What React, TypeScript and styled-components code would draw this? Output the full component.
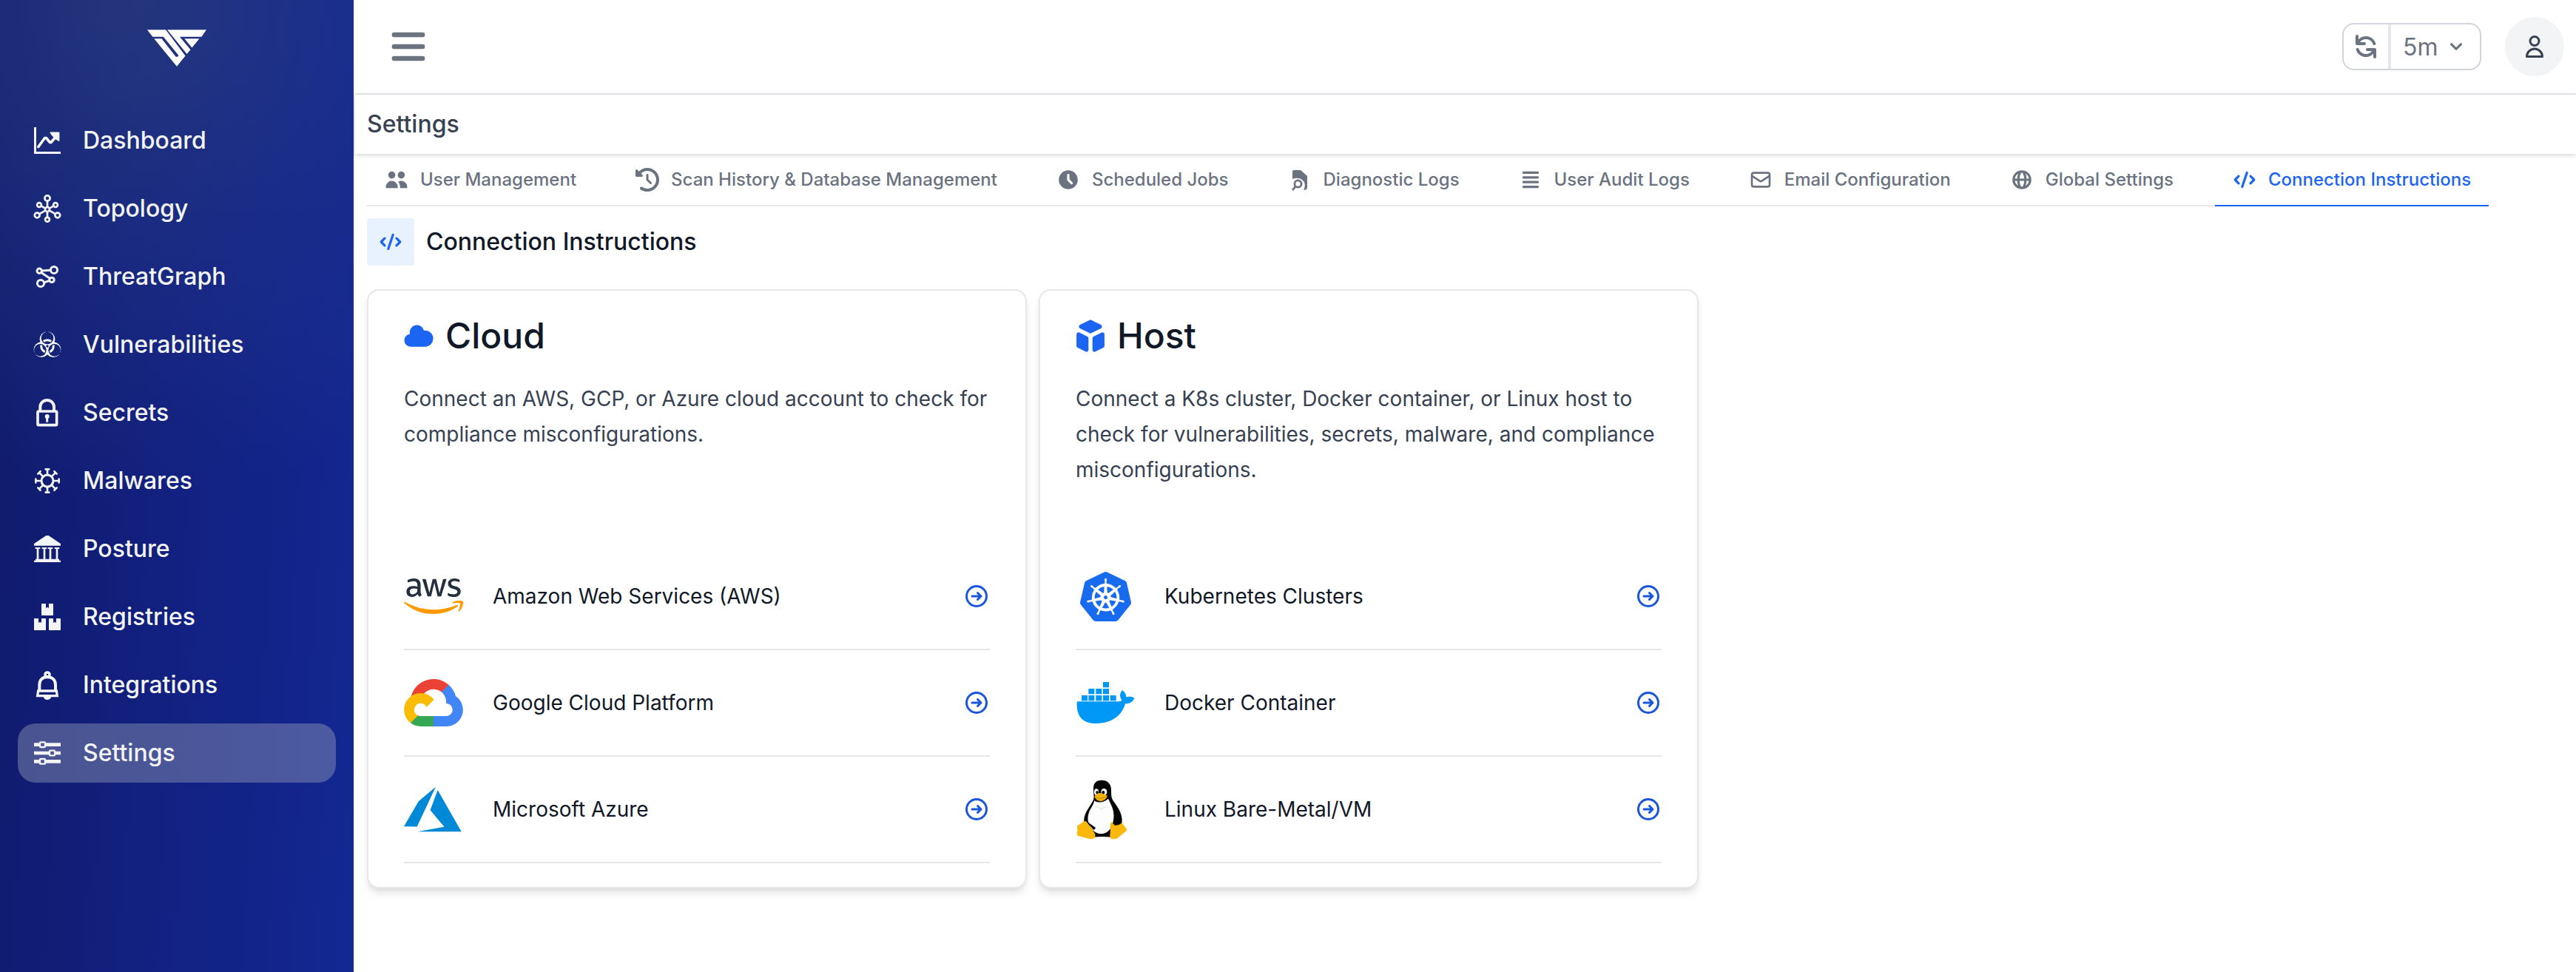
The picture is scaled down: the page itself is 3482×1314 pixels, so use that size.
import React from 'react';
import styled, { createGlobalStyle } from 'styled-components';
import { FaAws } from 'react-icons/fa';
import { FaClockRotateLeft } from 'react-icons/fa6';
import {
  HiChevronDown,
  HiClock,
  HiCode,
  HiGlobeAlt,
  HiMenu,
  HiOutlineArrowCircleRight,
  HiOutlineMail,
  HiOutlineUser,
  HiRefresh,
  HiUsers,
  HiViewList,
} from 'react-icons/hi';
import { SiKubernetes } from 'react-icons/si';

const color = {
  ink: '#111827',
  body: '#374151',
  muted: '#6b7280',
  line: '#e5e7eb',
  outline: '#d1d5db',
  soft: '#f3f4f6',
  blue: '#1c64f2',
  blueDeep: '#1a56db',
  blueSoft: '#e8f2fe',
};

const GlobalStyle = createGlobalStyle`
  *, *::before, *::after { box-sizing: border-box; }
  body {
    margin: 0;
    background: #fff;
    color: ${color.ink};
    font-family: Inter, "Liberation Sans", sans-serif;
    font-size: 28px;
  }
  h1, h2, h3, p, ul { margin: 0; padding: 0; }
  ul { list-style: none; }
  a { color: inherit; text-decoration: none; }
  button, select { font: inherit; color: inherit; border: 0; background: none; margin: 0; padding: 0; cursor: pointer; }
  svg { display: block; flex: none; }
`;

/* ---------- layout ---------- */

const Shell = styled.div`
  display: flex;
  min-height: 100vh;
`;

const Sidebar = styled.aside`
  flex: none;
  width: 480px;
  padding: 40px 24px;
  border-right: 2px solid ${color.soft};
  background:
    radial-gradient(ellipse 120% 52% at 40% 0%, rgba(48, 68, 128, 0.62), rgba(40, 62, 140, 0.34) 50%, transparent),
    linear-gradient(94deg, #101b6a, #122080 50%, #132893);
`;

const Brand = styled.a`
  display: flex;
  justify-content: center;
  margin-bottom: 60px;
`;

const NavList = styled.ul`
  display: flex;
  flex-direction: column;
  gap: 12px;
`;

const NavLink = styled.a<{ $active?: boolean }>`
  display: flex;
  align-items: center;
  gap: 30px;
  height: 80px;
  padding: 0 22px;
  border-radius: 24px;
  background: ${(p) => (p.$active ? 'rgba(156, 163, 185, 0.42)' : 'transparent')};
  color: ${color.soft};
  font-size: 32px;
  font-weight: 500;
  line-height: 38px;
`;

const Main = styled.main`
  flex: 1;
  min-width: 0;
`;

const TopBar = styled.header`
  display: flex;
  align-items: center;
  height: 128px;
  padding: 0 16px 0 40px;
  border-bottom: 2px solid ${color.line};
  color: ${color.muted};
`;

const TopActions = styled.div`
  display: flex;
  align-items: center;
  gap: 32px;
  margin-left: auto;
`;

const RefreshGroup = styled.div`
  display: flex;
  height: 64px;
  overflow: hidden;
  border: 2px solid ${color.outline};
  border-radius: 16px;
`;

const RefreshButton = styled.button`
  display: grid;
  place-items: center;
  width: 64px;
  border-right: 4px solid ${color.line};
`;

const IntervalField = styled.label`
  display: grid;
  align-items: center;
  width: 120px;

  > * { grid-area: 1 / 1; }
  > svg { justify-self: end; margin-right: 16px; pointer-events: none; }
`;

const IntervalSelect = styled.select`
  appearance: none;
  width: 100%;
  height: 100%;
  padding-left: 16px;
  font-size: 32px;
`;

const Avatar = styled.button`
  display: grid;
  place-items: center;
  width: 80px;
  height: 80px;
  border-radius: 50%;
  background: ${color.soft};
  color: ${color.body};
`;

const PageBar = styled.div`
  display: flex;
  align-items: center;
  height: 80px;
  padding: 0 16px;
  box-shadow: 0 2px 6px rgba(0, 0, 0, 0.16);
`;

const PageTitle = styled.h1`
  color: ${color.body};
  font-size: 32px;
  font-weight: 500;
  line-height: 38px;
`;

const Content = styled.div`
  padding: 0 16px 48px;
`;

const Tabs = styled.nav`
  display: flex;
  flex-wrap: wrap;
`;

const Tab = styled.a<{ $active?: boolean }>`
  display: flex;
  align-items: center;
  gap: 16px;
  padding: 19px 24px 18px;
  margin-right: 32px;
  position: relative;
  color: ${(p) => (p.$active ? color.blue : color.muted)};
  border-bottom: 2px solid ${(p) => (p.$active ? color.blue : color.line)};
  font-size: 24px;
  font-weight: 500;
  line-height: 32px;
  white-space: nowrap;

  &:last-child { margin-right: 0; }

  /* carries the rule across the gap between two tabs */
  &:not(:last-child)::after {
    content: '';
    position: absolute;
    left: 100%;
    bottom: -2px;
    width: 32px;
    height: 2px;
    background: ${color.line};
  }
`;

const SectionHead = styled.div`
  display: flex;
  align-items: center;
  gap: 16px;
  margin: 16px 0 32px;
`;

const SectionIcon = styled.span`
  display: grid;
  place-items: center;
  width: 64px;
  height: 64px;
  border-radius: 4px;
  background: ${color.blueSoft};
  color: ${color.blue};
`;

const SectionTitle = styled.h2`
  font-size: 32px;
  font-weight: 500;
  line-height: 38px;
`;

const Cards = styled.div`
  display: grid;
  grid-template-columns: repeat(2, minmax(0, 892px));
  gap: 16px;
`;

const Card = styled.section`
  padding: 32px 48px;
  border: 2px solid ${color.line};
  border-radius: 16px;
  background: #fff;
  box-shadow: 0 8px 12px -2px rgba(0, 0, 0, 0.1), 0 4px 8px -4px rgba(0, 0, 0, 0.1);
`;

const CardTitle = styled.h3`
  display: flex;
  align-items: center;
  gap: 16px;
  margin-bottom: 32px;
  font-size: 48px;
  font-weight: 500;
  line-height: 58px;
  color: ${color.ink};

  svg { color: ${color.blue}; }
`;

const CardText = styled.p`
  min-height: 220px;
  color: ${color.body};
  line-height: 48px;
`;

const Provider = styled.a`
  display: flex;
  align-items: center;
  gap: 40px;
  height: 144px;
  border-bottom: 2px solid ${color.line};
`;

const ProviderLogo = styled.span`
  display: grid;
  place-items: center;
  width: 80px;
  height: 80px;
`;

const ProviderArrow = styled(HiOutlineArrowCircleRight)`
  margin-left: auto;
  color: ${color.blueDeep};
`;

/* ---------- drawings ---------- */

const BrandMark = () => (
  <svg width="80" height="50" viewBox="55 42 242 149" fill="#fff" aria-label="Home">
    <path d="M55 42H131L211 148L176 191L83 78H114L172 152L180 152L183 146L121 70H77Z" />
    <path d="M137 42H297L277 70H188L232 123L217 141Z" />
    <path d="M207 78H268L238 115Z" />
  </svg>
);

const NavSvg = ({ box, children }: { box: number; children: React.ReactNode }) => (
  <svg
    width="36"
    height="36"
    viewBox={`0 0 ${box} ${box}`}
    fill="none"
    stroke="currentColor"
    overflow="visible"
    aria-hidden="true"
  >
    {children}
  </svg>
);

const DashboardIcon = () => (
  <NavSvg box={36}>
    <path d="M1.5 0V34.5H36" strokeWidth="3" />
    <path d="M5.8 26.5L14.5 14.5H16.5L21.5 20.5H23L32 10" strokeWidth="3.6" strokeLinecap="round" strokeLinejoin="round" />
    <path d="M22.5 7.4H33.4V18L29.6 15.4L25.5 11.4Z" fill="currentColor" strokeWidth="2" strokeLinejoin="round" />
  </NavSvg>
);

const TopologyIcon = () => (
  <NavSvg box={36}>
    <g strokeWidth="2.7">
      <circle cx="18" cy="19" r="3" />
      <circle cx="18" cy="4" r="3.6" />
      <circle cx="7" cy="13" r="2.9" />
      <circle cx="29" cy="13" r="2.9" />
      <circle cx="4.2" cy="27" r="3.4" />
      <circle cx="31.8" cy="27" r="3.4" />
      <circle cx="18" cy="32.8" r="2.9" />
      <path d="M18 8V16M18 22V30M9.8 14.6L15.3 17.6M26.2 14.6L20.7 17.6M7.4 25.2L15.3 20.6M28.6 25.2L20.7 20.6" />
    </g>
  </NavSvg>
);

const ThreatGraphIcon = () => (
  <NavSvg box={36}>
    <g strokeWidth="3">
      <circle cx="7.2" cy="10.3" r="3.2" />
      <circle cx="27" cy="9" r="4.6" />
      <circle cx="24" cy="22.4" r="3.2" />
      <circle cx="9" cy="27" r="4.6" />
      <path d="M10.6 10L22.2 9.2M9.8 12.6L21.4 20.2M13.6 25.8L20.8 23.4" />
    </g>
  </NavSvg>
);

const VulnerabilitiesIcon = () => (
  <NavSvg box={108}>
    <defs>
      <mask id="hazard-horns" maskUnits="userSpaceOnUse" x="-4" y="-4" width="116" height="116">
        <g fill="#fff" stroke="none">
          <circle cx="54" cy="32" r="31" />
          <circle cx="30" cy="74" r="31" />
          <circle cx="78" cy="74" r="31" />
        </g>
        <g fill="#000" stroke="none">
          <circle cx="54" cy="27" r="25" />
          <circle cx="25" cy="76" r="25" />
          <circle cx="83" cy="76" r="25" />
          <circle cx="54" cy="60" r="5" />
        </g>
        <path d="M54 -4V12M12 84L-4 94M96 84L112 94" stroke="#000" strokeWidth="10" />
      </mask>
      <clipPath id="hazard-ring">
        <circle cx="54" cy="27" r="21" />
        <circle cx="25" cy="76" r="21" />
        <circle cx="83" cy="76" r="21" />
      </clipPath>
    </defs>
    <rect x="-4" y="-4" width="116" height="116" fill="currentColor" stroke="none" mask="url(#hazard-horns)" />
    <circle cx="54" cy="60" r="25" strokeWidth="9" clipPath="url(#hazard-ring)" />
  </NavSvg>
);

const SecretsIcon = () => (
  <NavSvg box={108}>
    <rect x="15" y="48" width="77" height="56" rx="4" strokeWidth="11" />
    <path d="M25 48V30a28 27 0 0 1 56 0V48" strokeWidth="12" />
    <circle cx="53" cy="69" r="9" fill="currentColor" stroke="none" />
    <path d="M53 70V92" strokeWidth="9" />
  </NavSvg>
);

const MalwaresIcon = () => (
  <NavSvg box={108}>
    <circle cx="54" cy="54" r="24" strokeWidth="9" />
    {[0, 45, 90, 135, 180, 225, 270, 315].map((angle) => (
      <path key={angle} d="M54 28V8M47 7H61" strokeWidth="8" strokeLinecap="round" transform={`rotate(${angle} 54 54)`} />
    ))}
  </NavSvg>
);

const PostureIcon = () => (
  <NavSvg box={108}>
    <g fill="currentColor" stroke="none">
      <path d="M49 0H59L108 33V41H0V33Z" />
      {[15, 42, 66, 93].map((x) => (
        <path key={x} d={`M${x - 10} 48H${x + 10}V54H${x + 4}V96H${x - 4}V54H${x - 10}Z`} />
      ))}
      <path d="M6 95H102V101H108V108H0V101H6Z" />
    </g>
  </NavSvg>
);

const CRATE = 'M2 0H18V18L24 14L30 18V0H46Q48 0 48 2V46Q48 48 46 48H2Q0 48 0 46V2Q0 0 2 0Z';

const RegistriesIcon = () => (
  <NavSvg box={108}>
    <g fill="currentColor" stroke="none">
      <path d={CRATE} transform="translate(30 0)" />
      <path d={CRATE} transform="translate(0 60)" />
      <path d={CRATE} transform="translate(60 60)" />
    </g>
  </NavSvg>
);

const IntegrationsIcon = () => (
  <NavSvg box={108}>
    <circle cx="54" cy="12" r="9" strokeWidth="11" />
    <path d="M22 76V54C22 32 35 22 54 22S87 32 87 54V76" strokeWidth="12" />
    <path d="M17 78H91L94 98H14Z" strokeWidth="10" />
    <path d="M38 100A16 14 0 0 0 70 100Z" fill="currentColor" stroke="none" />
  </NavSvg>
);

const SettingsIcon = () => (
  <NavSvg box={108}>
    <path d="M0 20H22M48 20H108M0 54H60M86 54H108M0 88H22M48 88H108" strokeWidth="14" />
    <g strokeWidth="7">
      <rect x="24" y="10" width="21" height="20" rx="3" />
      <rect x="63" y="44" width="21" height="20" rx="3" />
      <rect x="24" y="78" width="21" height="20" rx="3" />
    </g>
  </NavSvg>
);

const DiagnosticIcon = () => (
  <svg width="32" height="32" viewBox="0 0 32 32" fill="none" stroke="currentColor" aria-hidden="true">
    <path
      d="M6 5Q6 3 8 3H17L26 11V26Q26 30 21 30Q23.5 26 22.5 21C21 15 13 12 6 15Z"
      fill="currentColor"
      stroke="none"
    />
    <circle cx="13.5" cy="21.5" r="4.6" strokeWidth="2.8" />
    <path d="M10.2 25L6 30" strokeWidth="2.8" />
  </svg>
);

const CloudIcon = () => (
  <svg width="40" height="48" viewBox="1.8 0.16 16.4 19.68" fill="currentColor" aria-hidden="true">
    <path d="M5.5 16a3.5 3.5 0 01-.369-6.98 4 4 0 117.753-1.977A4.5 4.5 0 1113.5 16h-8z" />
  </svg>
);

const HostIcon = () => (
  <svg width="40" height="48" viewBox="2.6 1.12 14.8 17.76" fill="currentColor" aria-hidden="true">
    <path d="M11 17a1 1 0 001.447.894l4-2A1 1 0 0017 15V9.236a1 1 0 00-1.447-.894l-4 2a1 1 0 00-.553.894V17zM15.211 6.276a1 1 0 000-1.788l-4.764-2.382a1 1 0 00-.894 0L4.789 4.488a1 1 0 000 1.788l4.764 2.382a1 1 0 00.894 0l4.764-2.382zM4.447 8.342A1 1 0 003 9.236V15a1 1 0 00.553.894l4 2A1 1 0 009 17v-5.764a1 1 0 00-.553-.894l-4-2z" />
  </svg>
);

const GradientDefs = styled.svg`
  position: absolute;
`;

const AwsMark = styled(FaAws)`
  fill: url(#aws-fill);
`;

const AwsLogo = () => (
  <>
    <GradientDefs width="0" height="0" aria-hidden="true">
      <linearGradient id="aws-fill" gradientUnits="userSpaceOnUse" x1="0" y1="0" x2="0" y2="512">
        <stop offset="0.58" stopColor="#252f3e" />
        <stop offset="0.58" stopColor="#ff9900" />
      </linearGradient>
    </GradientDefs>
    <AwsMark size={80} />
  </>
);

const GoogleCloudLogo = () => (
  <svg width="80" height="64" viewBox="0 0 256 206" aria-hidden="true">
    <path fill="#EA4335" d="M170.2517,56.8186 L192.5047,34.5656 L193.9877,25.1956 C153.4367,-11.6774 88.9757,-7.4964 52.4207,33.9196 C42.2667,45.4226 34.7337,59.7636 30.7167,74.5726 L38.6867,73.4496 L83.1917,66.1106 L86.6277,62.5966 C106.4247,40.8546 139.8977,37.9296 162.7557,56.4286 Z" />
    <path fill="#4285F4" d="M224.2048,73.9182 C219.0898,55.0822 208.5888,38.1492 193.9878,25.1962 L162.7558,56.4282 C175.9438,67.2042 183.4568,83.4382 183.1348,100.4652 L183.1348,106.0092 C198.4858,106.0092 210.9318,118.4542 210.9318,133.8052 C210.9318,149.1572 198.4858,161.2902 183.1348,161.2902 L127.4638,161.2902 L121.9978,167.2242 L121.9978,200.5642 L127.4638,205.7952 L183.1348,205.7952 C223.0648,206.1062 255.6868,174.3012 255.9978,134.3712 C256.1858,110.1682 244.2528,87.4782 224.2048,73.9182" />
    <path fill="#34A853" d="M71.8704,205.7957 L127.4634,205.7957 L127.4634,161.2897 L71.8704,161.2897 C67.9094,161.2887 64.0734,160.4377 60.4714,158.7917 L52.5844,161.2117 L30.1754,183.4647 L28.2234,191.0387 C40.7904,200.5277 56.1234,205.8637 71.8704,205.7957" />
    <path fill="#FBBC05" d="M71.8704,61.4255 C31.9394,61.6635 -0.2366,94.2275 0.0014,134.1575 C0.1344,156.4555 10.5484,177.4455 28.2234,191.0385 L60.4714,158.7915 C46.4804,152.4705 40.2634,136.0055 46.5844,122.0155 C52.9044,108.0255 69.3704,101.8085 83.3594,108.1285 C89.5244,110.9135 94.4614,115.8515 97.2464,122.0155 L129.4944,89.7685 C115.7734,71.8315 94.4534,61.3445 71.8704,61.4255" />
  </svg>
);

const AzureLogo = () => (
  <svg width="80" height="80" viewBox="2 1.7 20.6 20.6" fill="#0089d6" aria-hidden="true">
    <path d="M13.05 4.24L6.56 18.05L2 18L7.09 9.24L13.05 4.24M13.75 5.33L22 19.76H6.74L16.04 18.1L11.17 12.31L13.75 5.33Z" />
  </svg>
);

const DockerLogo = () => (
  <svg width="80" height="80" viewBox="0 0 240 240" fill="#0098f7" aria-hidden="true">
    {[[111, 36], [52, 63], [82, 63], [111, 63], [24, 90], [52, 90], [82, 90], [111, 90], [140, 90]].map(([x, y]) => (
      <rect key={`${x}-${y}`} x={x} y={y} width="24" height="22" />
    ))}
    <path d="M5 119Q5 115 9 115H168C177 115 183 113 187 110C177 97 178 82 189 69C199 76 205 86 205 97C216 94 229 94 238 101C232 116 221 124 201 124C189 168 150 204 84 204C30 204 3 178 5 119Z" />
  </svg>
);

const TuxLogo = () => (
  <svg width="80" height="82" viewBox="0 0 240 244" aria-hidden="true">
    <path fill="#050505" d="M72 38C71 12 84 1 105 1C128 1 143 13 144 40C145 58 142 68 153 86C169 108 188 134 188 164C188 182 178 192 168 204L146 232Q106 228 70 232L38 186C30 168 34 146 44 128C54 110 68 92 73 78C75 66 72 54 72 38Z" />
    <path fill="#fdfdfd" d="M76 84C86 94 112 94 132 76C142 98 158 122 154 154C152 182 140 216 104 219C74 217 60 196 52 172C46 154 52 132 60 118C68 106 72 98 76 84Z" />
    <path fill="#e9e9ec" d="M72 112C84 104 100 108 104 118C110 108 128 104 138 112C128 110 112 112 104 124C98 112 84 110 72 112Z" />
    <path fill="#1c1c1e" d="M152 118C166 130 172 156 160 180C170 164 172 140 152 118Z" />
    <ellipse cx="84" cy="49" rx="9" ry="13" fill="#fff" />
    <ellipse cx="115" cy="49" rx="12" ry="14" fill="#fff" />
    <ellipse cx="87" cy="51" rx="5" ry="7" fill="#111" />
    <ellipse cx="112" cy="51" rx="6" ry="8" fill="#111" />
    <path fill="#f5b301" d="M76 66C84 58 92 53 100 53C110 55 120 60 128 64C128 76 112 86 100 86C88 86 78 76 76 66Z" />
    <path fill="none" stroke="#c98a05" strokeWidth="3" d="M78 68C90 78 112 76 127 66" />
    <path fill="#fbb80a" d="M8 184C14 180 22 180 26 172Q32 164 42 168C52 178 64 198 76 214C84 228 78 240 60 240C44 236 22 230 8 226C2 220 10 208 6 196Q4 188 8 184Z" />
    <path fill="#050505" d="M44 168L78 192Q84 200 72 202Z" />
    <path fill="#fbb80a" d="M143 172C150 168 152 182 160 184C172 186 182 178 190 174C192 184 200 190 207 200C208 208 196 214 188 220C176 232 168 240 152 240C138 240 138 230 140 214C142 200 138 182 143 172Z" />
  </svg>
);

/* ---------- data ---------- */

const navItems = [
  { label: 'Dashboard', icon: <DashboardIcon /> },
  { label: 'Topology', icon: <TopologyIcon /> },
  { label: 'ThreatGraph', icon: <ThreatGraphIcon /> },
  { label: 'Vulnerabilities', icon: <VulnerabilitiesIcon /> },
  { label: 'Secrets', icon: <SecretsIcon /> },
  { label: 'Malwares', icon: <MalwaresIcon /> },
  { label: 'Posture', icon: <PostureIcon /> },
  { label: 'Registries', icon: <RegistriesIcon /> },
  { label: 'Integrations', icon: <IntegrationsIcon /> },
  { label: 'Settings', icon: <SettingsIcon />, active: true },
];

const tabs = [
  { label: 'User Management', icon: <HiUsers size={32} /> },
  { label: 'Scan History & Database Management', icon: <FaClockRotateLeft size={32} /> },
  { label: 'Scheduled Jobs', icon: <HiClock size={32} /> },
  { label: 'Diagnostic Logs', icon: <DiagnosticIcon /> },
  { label: 'User Audit Logs', icon: <HiViewList size={32} /> },
  { label: 'Email Configuration', icon: <HiOutlineMail size={32} /> },
  { label: 'Global Settings', icon: <HiGlobeAlt size={32} /> },
  { label: 'Connection Instructions', icon: <HiCode size={32} />, active: true },
];

const groups = [
  {
    title: 'Cloud',
    icon: <CloudIcon />,
    text: 'Connect an AWS, GCP, or Azure cloud account to check for compliance misconfigurations.',
    providers: [
      { name: 'Amazon Web Services (AWS)', logo: <AwsLogo /> },
      { name: 'Google Cloud Platform', logo: <GoogleCloudLogo /> },
      { name: 'Microsoft Azure', logo: <AzureLogo /> },
    ],
  },
  {
    title: 'Host',
    icon: <HostIcon />,
    text: 'Connect a K8s cluster, Docker container, or Linux host to check for vulnerabilities, secrets, malware, and compliance misconfigurations.',
    providers: [
      { name: 'Kubernetes Clusters', logo: <SiKubernetes size={69} color="#186bee" /> },
      { name: 'Docker Container', logo: <DockerLogo /> },
      { name: 'Linux Bare-Metal/VM', logo: <TuxLogo /> },
    ],
  },
];

export default function App() {
  return (
    <>
      <GlobalStyle />
      <Shell>
        <Sidebar>
          <Brand href="#">
            <BrandMark />
          </Brand>
          <nav>
            <NavList>
              {navItems.map((item) => (
                <li key={item.label}>
                  <NavLink href="#" $active={item.active} aria-current={item.active ? 'page' : undefined}>
                    {item.icon}
                    {item.label}
                  </NavLink>
                </li>
              ))}
            </NavList>
          </nav>
        </Sidebar>
        <Main>
          <TopBar>
            <button type="button" aria-label="Toggle menu">
              <HiMenu size={64} />
            </button>
            <TopActions>
              <RefreshGroup>
                <RefreshButton type="button" aria-label="Refresh">
                  <HiRefresh size={40} />
                </RefreshButton>
                <IntervalField>
                  <IntervalSelect aria-label="Refresh interval" defaultValue="5m">
                    <option value="5m">5m</option>
                  </IntervalSelect>
                  <HiChevronDown size={32} />
                </IntervalField>
              </RefreshGroup>
              <Avatar type="button" aria-label="Account">
                <HiOutlineUser size={36} />
              </Avatar>
            </TopActions>
          </TopBar>
          <PageBar>
            <PageTitle>Settings</PageTitle>
          </PageBar>
          <Content>
            <Tabs>
              {tabs.map((tab) => (
                <Tab key={tab.label} href="#" $active={tab.active}>
                  {tab.icon}
                  {tab.label}
                </Tab>
              ))}
            </Tabs>
            <SectionHead>
              <SectionIcon>
                <HiCode size={32} />
              </SectionIcon>
              <SectionTitle>Connection Instructions</SectionTitle>
            </SectionHead>
            <Cards>
              {groups.map((group) => (
                <Card key={group.title}>
                  <CardTitle>
                    {group.icon}
                    {group.title}
                  </CardTitle>
                  <CardText>{group.text}</CardText>
                  <ul>
                    {group.providers.map((provider) => (
                      <li key={provider.name}>
                        <Provider href="#">
                          <ProviderLogo>{provider.logo}</ProviderLogo>
                          {provider.name}
                          <ProviderArrow size={36} />
                        </Provider>
                      </li>
                    ))}
                  </ul>
                </Card>
              ))}
            </Cards>
          </Content>
        </Main>
      </Shell>
    </>
  );
}
